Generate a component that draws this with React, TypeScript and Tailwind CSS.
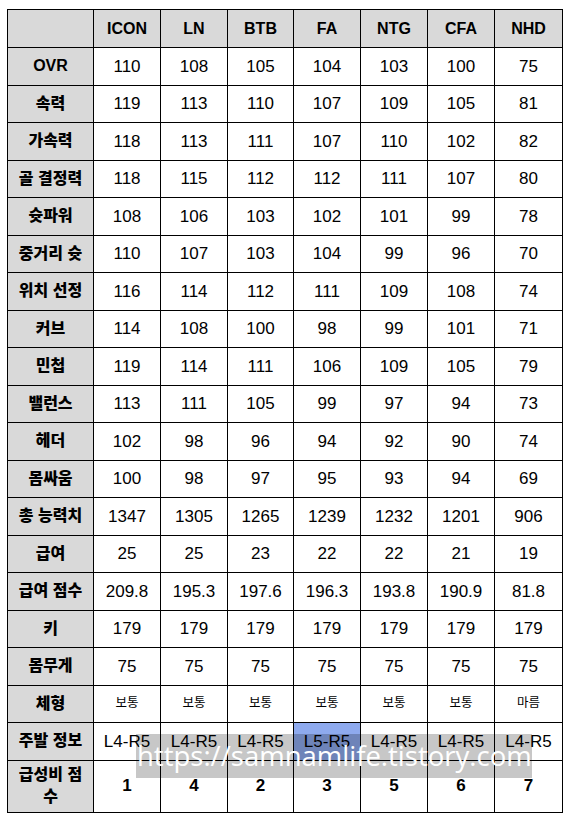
const cols = ['ICON', 'LN', 'BTB', 'FA', 'NTG', 'CFA', 'NHD']

const rows: { label: string; values: string[]; kind?: 'small' }[] = [
  { label: 'OVR', values: ['110', '108', '105', '104', '103', '100', '75'] },
  { label: '속력', values: ['119', '113', '110', '107', '109', '105', '81'] },
  { label: '가속력', values: ['118', '113', '111', '107', '110', '102', '82'] },
  { label: '골 결정력', values: ['118', '115', '112', '112', '111', '107', '80'] },
  { label: '슛파워', values: ['108', '106', '103', '102', '101', '99', '78'] },
  { label: '중거리 슛', values: ['110', '107', '103', '104', '99', '96', '70'] },
  { label: '위치 선정', values: ['116', '114', '112', '111', '109', '108', '74'] },
  { label: '커브', values: ['114', '108', '100', '98', '99', '101', '71'] },
  { label: '민첩', values: ['119', '114', '111', '106', '109', '105', '79'] },
  { label: '밸런스', values: ['113', '111', '105', '99', '97', '94', '73'] },
  { label: '헤더', values: ['102', '98', '96', '94', '92', '90', '74'] },
  { label: '몸싸움', values: ['100', '98', '97', '95', '93', '94', '69'] },
  { label: '총 능력치', values: ['1347', '1305', '1265', '1239', '1232', '1201', '906'] },
  { label: '급여', values: ['25', '25', '23', '22', '22', '21', '19'] },
  { label: '급여 점수', values: ['209.8', '195.3', '197.6', '196.3', '193.8', '190.9', '81.8'] },
  { label: '키', values: ['179', '179', '179', '179', '179', '179', '179'] },
  { label: '몸무게', values: ['75', '75', '75', '75', '75', '75', '75'] },
  { label: '체형', values: ['보통', '보통', '보통', '보통', '보통', '보통', '마름'], kind: 'small' },
  { label: '주발 정보', values: ['L4-R5', 'L4-R5', 'L4-R5', 'L5-R5', 'L4-R5', 'L4-R5', 'L4-R5'] },
]

const footer = ['1', '4', '2', '3', '5', '6', '7']

const colWidths = ['w-[86px]', 'w-[67px]', 'w-[67px]', 'w-[66px]', 'w-[67px]', 'w-[67px]', 'w-[67px]', 'w-[68px]']

export default function App() {
  return (
    <main className="min-h-[818px] w-[572px] bg-white pl-[7px] pt-[9px] font-['Liberation_Sans','Noto_Sans_CJK_KR',sans-serif] text-black">
      <div className="relative w-[555px]">
        <table className="w-[555px] table-fixed border-collapse border border-black">
          <colgroup>
            {colWidths.map((w, i) => (
              <col key={i} className={w} />
            ))}
          </colgroup>
          <thead>
            <tr className="h-[38px]">
              <th className="border border-black bg-[#d9d9d9]" />
              {cols.map((c) => (
                <th key={c} className="border border-black bg-[#d9d9d9] text-center text-[16px] font-bold">
                  {c}
                </th>
              ))}
            </tr>
          </thead>
          <tbody>
            {rows.map((r) => (
              <tr key={r.label} className="h-[37.5px]">
                <th className="border border-black bg-[#d9d9d9] text-center text-[16px] font-black whitespace-nowrap">
                  {r.label}
                </th>
                {r.values.map((v, i) => (
                  <td
                    key={i}
                    className={
                      'border border-black text-center ' +
                      (r.kind === 'small' ? 'text-[12.5px] ' : 'text-[17px] ') +
                      (r.label === '주발 정보' && i === 3 ? 'bg-[#8eaaee]' : 'bg-white')
                    }
                  >
                    {v}
                  </td>
                ))}
              </tr>
            ))}
            <tr className="h-[52px]">
              <th className="border border-black bg-[#d9d9d9] text-center text-[16px] font-black leading-[22px]">
                급성비 점<br />수
              </th>
              {footer.map((v, i) => (
                <td key={i} className="border border-black bg-white text-center text-[17px] font-bold">
                  {v}
                </td>
              ))}
            </tr>
          </tbody>
        </table>

        {/* watermark */}
        <div className="absolute left-[129px] top-[725px] flex h-[44px] w-[396px] items-center bg-black/[0.22] pl-[1px]">
          <span className="font-['Open_Sans',sans-serif] text-[27.5px] leading-none text-white">
            https://samnamlife.tistory.com
          </span>
        </div>
      </div>
    </main>
  )
}
